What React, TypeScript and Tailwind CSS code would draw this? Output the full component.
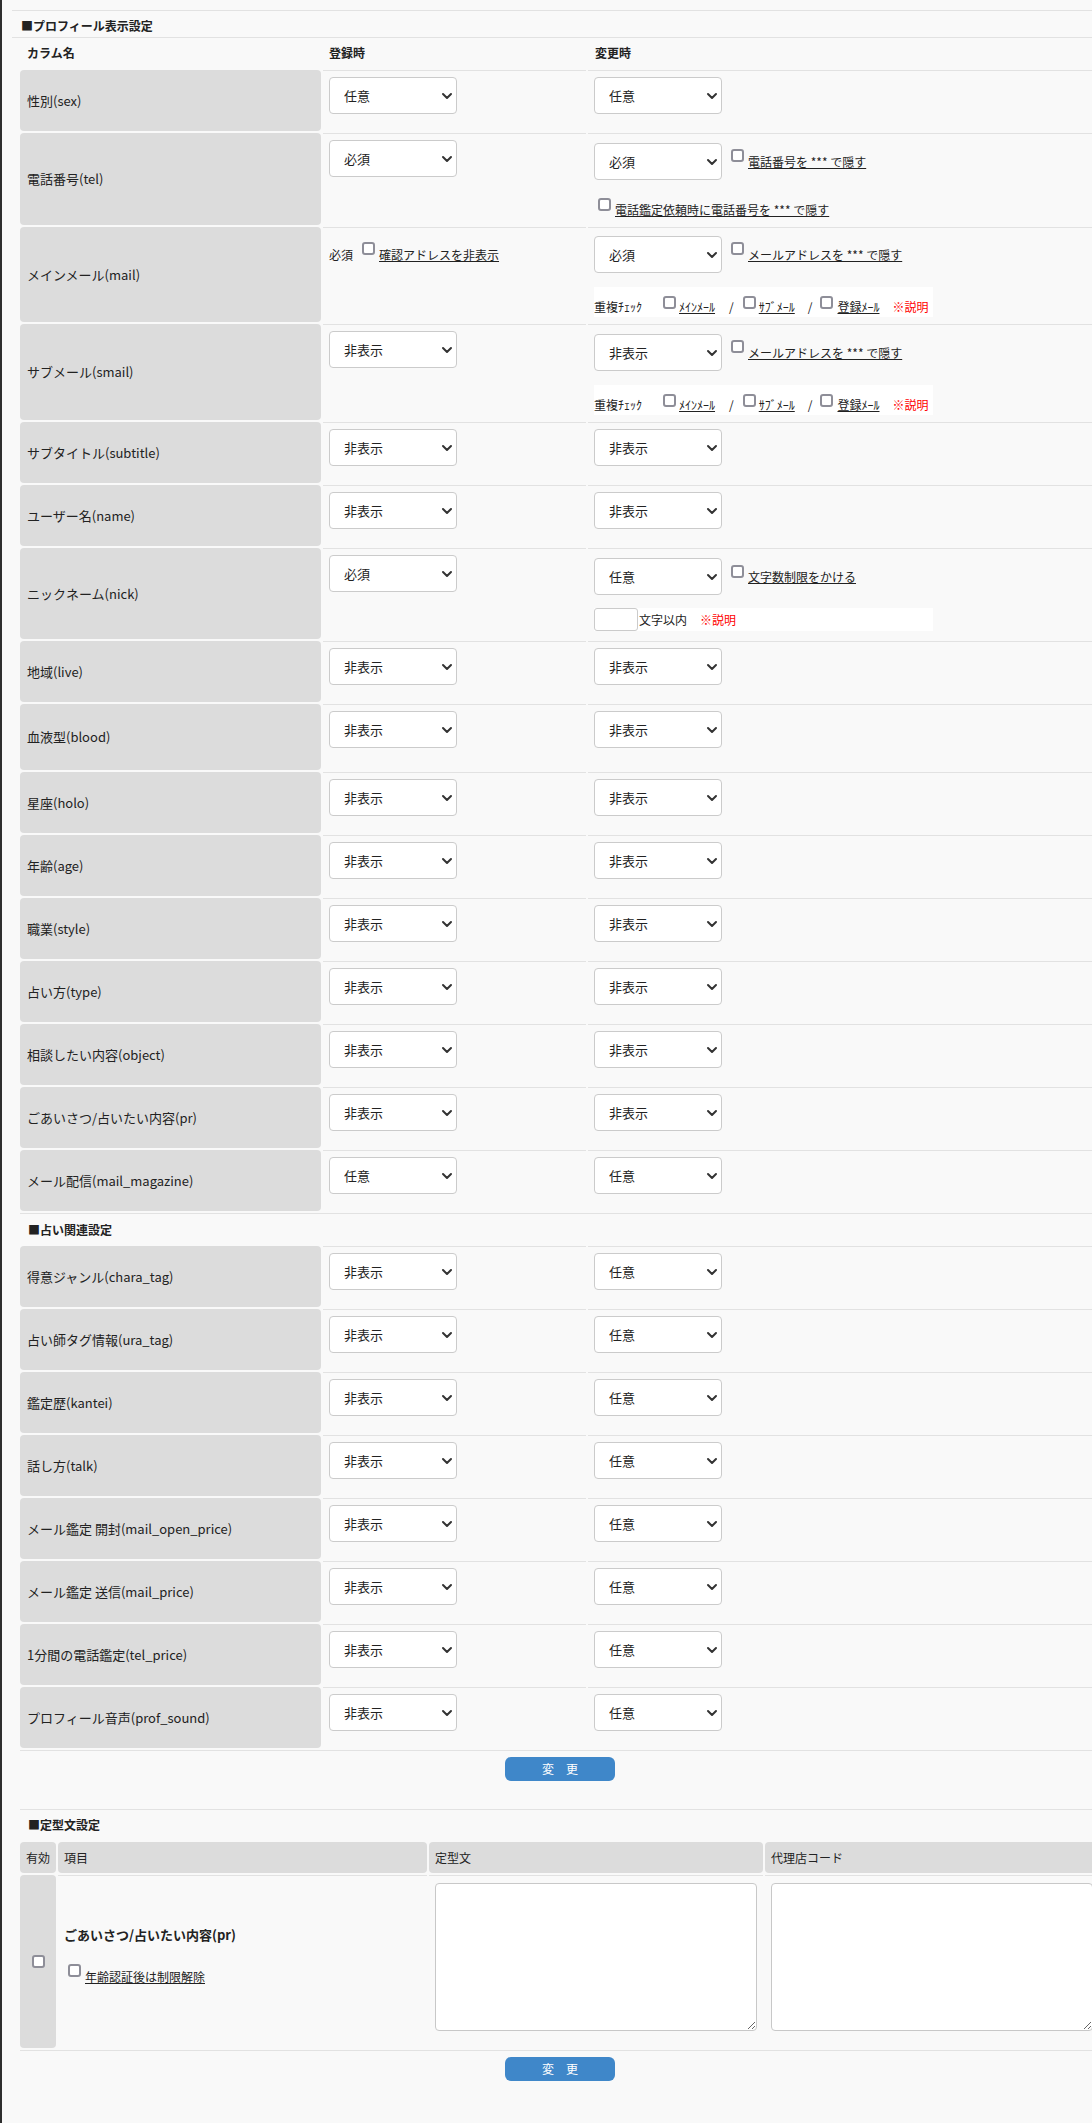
import type { ReactNode } from "react";
import { ChevronDown } from "lucide-react";

const OPTIONS = ["非表示", "任意", "必須"];

const Sel = ({ value }: { value: string }) => (
  <div className="relative h-[37px] w-[128px] shrink-0">
    <select
      defaultValue={value}
      className="h-full w-full appearance-none rounded-[4px] border border-[#cbcbcb] bg-white pl-[14px] text-[13px] text-[#222] outline-none"
    >
      {OPTIONS.map((o) => (
        <option key={o}>{o}</option>
      ))}
    </select>
    <ChevronDown
      size={16}
      strokeWidth={3}
      className="pointer-events-none absolute right-[2px] top-1/2 -translate-y-1/2 text-[#333]"
    />
  </div>
);

const Check = ({ className = "" }: { className?: string }) => (
  <input
    type="checkbox"
    className={`h-[13px] w-[13px] shrink-0 appearance-none rounded-[3px] border-2 border-[#8e8e98] bg-white ${className}`}
  />
);

const Link = ({ children, className = "" }: { children: ReactNode; className?: string }) => (
  <span className={`cursor-pointer text-[12px] underline ${className}`}>{children}</span>
);

// label cell + 登録時 + 変更時
const Row = ({
  label,
  reg,
  edit,
  minH = "min-h-[61px]",
}: {
  label: string;
  reg: ReactNode;
  edit: ReactNode;
  minH?: string;
}) => (
  <div className={`flex gap-[2px] ${minH}`}>
    <div className="flex w-[301px] shrink-0 items-center rounded-[4px] bg-[#dcdcdc] pl-[7px] text-[13px]">
      {label}
    </div>
    <div className="w-[263px] shrink-0 border-t border-[#e2e2e2] px-[6px]">{reg}</div>
    <div className="flex-1 border-t border-[#e2e2e2] px-[6px]">{edit}</div>
  </div>
);

const SimpleRow = ({
  label,
  reg,
  edit,
  minH,
}: {
  label: string;
  reg: string;
  edit: string;
  minH?: string;
}) => (
  <Row
    label={label}
    minH={minH}
    reg={
      <div className="pt-[6px]">
        <Sel value={reg} />
      </div>
    }
    edit={
      <div className="pt-[6px]">
        <Sel value={edit} />
      </div>
    }
  />
);

// select + "*** で隠す" style line
const SelCheck = ({ value, text }: { value: string; text: string }) => (
  <div className="flex items-center">
    <Sel value={value} />
    <Check className="mb-[12px] ml-[9px]" />
    <Link className="ml-[4px]">{text}</Link>
  </div>
);

const DupCheck = () => (
  <div className="mt-[14px] flex h-[30px] w-[339px] items-center bg-white text-[12px]">
    <span className="mt-[9px]">重複ﾁｪｯｸ</span>
    <Check className="ml-[21px]" />
    <Link className="ml-[3px] mt-[9px]">ﾒｲﾝﾒｰﾙ</Link>
    <span className="ml-[14px] mt-[9px]">/</span>
    <Check className="ml-[9px]" />
    <Link className="ml-[3px] mt-[9px]">ｻﾌﾞﾒｰﾙ</Link>
    <span className="ml-[13px] mt-[9px]">/</span>
    <Check className="ml-[8px]" />
    <Link className="ml-[4px] mt-[9px]">登録ﾒｰﾙ</Link>
    <span className="ml-[13px] mt-[9px] text-[#ff0000]">※説明</span>
  </div>
);

const profileRest: [string, string, string][] = [
  ["星座(holo)", "非表示", "非表示"],
  ["年齢(age)", "非表示", "非表示"],
  ["職業(style)", "非表示", "非表示"],
  ["占い方(type)", "非表示", "非表示"],
  ["相談したい内容(object)", "非表示", "非表示"],
  ["ごあいさつ/占いたい内容(pr)", "非表示", "非表示"],
  ["メール配信(mail_magazine)", "任意", "任意"],
];

const uranaiRows: [string, string, string][] = [
  ["得意ジャンル(chara_tag)", "非表示", "任意"],
  ["占い師タグ情報(ura_tag)", "非表示", "任意"],
  ["鑑定歴(kantei)", "非表示", "任意"],
  ["話し方(talk)", "非表示", "任意"],
  ["メール鑑定 開封(mail_open_price)", "非表示", "任意"],
  ["メール鑑定 送信(mail_price)", "非表示", "任意"],
  ["1分間の電話鑑定(tel_price)", "非表示", "任意"],
  ["プロフィール音声(prof_sound)", "非表示", "任意"],
];

const SubmitButton = () => (
  <button
    type="button"
    className="h-[24px] w-[110px] rounded-[6px] bg-[#3f87c9] text-[12px] text-white"
  >
    変　更
  </button>
);

export default function App() {
  return (
    <div className="min-h-[2123px] w-full overflow-hidden border-l-2 border-[#2e2e2e] bg-[#f9f9f9] font-['Noto_Sans_CJK_JP','Noto_Sans',sans-serif] text-[#222]">
      <div className="w-[1098px] pl-[10px] pt-[10px]">
        {/* プロフィール表示設定 */}
        <div className="flex h-[28px] items-center border-y border-[#e2e2e2] pl-[9px] pt-[3px] text-[12px] font-bold">
          ■プロフィール表示設定
        </div>
        <div className="ml-[8px] w-[1080px]">
          <div className="flex h-[30px] items-center gap-[2px] text-[12px] font-bold">
            <div className="w-[301px] shrink-0 pl-[7px]">カラム名</div>
            <div className="w-[263px] shrink-0 pl-[6px]">登録時</div>
            <div className="flex-1 pl-[7px]">変更時</div>
          </div>

          <div className="mt-[2px] flex flex-col gap-[2px]">
            <SimpleRow label="性別(sex)" reg="任意" edit="任意" />
            <Row
              label="電話番号(tel)"
              reg={
                <div className="pt-[6px]">
                  <Sel value="必須" />
                </div>
              }
              edit={
                <div className="pb-[5px] pt-[9px]">
                  <SelCheck value="必須" text="電話番号を *** で隠す" />
                  <div className="mt-[20px] flex h-[20px] items-center">
                    <Check className="mb-[11px] ml-[4px]" />
                    <Link className="ml-[4px]">電話鑑定依頼時に電話番号を *** で隠す</Link>
                  </div>
                </div>
              }
            />
            <Row
              label="メインメール(mail)"
              reg={
                <div className="mt-[8px] flex h-[37px] items-center text-[12px]">
                  <span>必須</span>
                  <Check className="mb-[12px] ml-[9px]" />
                  <Link className="ml-[4px]">確認アドレスを非表示</Link>
                </div>
              }
              edit={
                <div className="pb-[5px] pt-[8px]">
                  <SelCheck value="必須" text="メールアドレスを *** で隠す" />
                  <DupCheck />
                </div>
              }
            />
            <Row
              label="サブメール(smail)"
              reg={
                <div className="pt-[6px]">
                  <Sel value="非表示" />
                </div>
              }
              edit={
                <div className="pb-[5px] pt-[9px]">
                  <SelCheck value="非表示" text="メールアドレスを *** で隠す" />
                  <DupCheck />
                </div>
              }
            />
            <SimpleRow label="サブタイトル(subtitle)" reg="非表示" edit="非表示" />
            <SimpleRow label="ユーザー名(name)" reg="非表示" edit="非表示" />
            <Row
              label="ニックネーム(nick)"
              reg={
                <div className="pt-[6px]">
                  <Sel value="必須" />
                </div>
              }
              edit={
                <div className="pb-[8px] pt-[9px]">
                  <div className="flex items-center">
                    <Sel value="任意" />
                    <Check className="mb-[11px] ml-[9px]" />
                    <Link className="ml-[4px]">文字数制限をかける</Link>
                  </div>
                  <div className="mt-[13px] flex h-[23px] w-[339px] items-center bg-white text-[12px]">
                    <input
                      type="text"
                      className="h-[23px] w-[44px] rounded-[3px] border border-[#cbcbcb] bg-white px-[4px] outline-none"
                    />
                    <span className="ml-[1px]">文字以内</span>
                    <span className="ml-[13px] text-[#ff0000]">※説明</span>
                  </div>
                </div>
              }
            />
            <SimpleRow label="地域(live)" reg="非表示" edit="非表示" />
            <SimpleRow label="血液型(blood)" reg="非表示" edit="非表示" minH="min-h-[66px]" />
            {profileRest.map(([label, reg, edit]) => (
              <SimpleRow key={label} label={label} reg={reg} edit={edit} />
            ))}
          </div>

          {/* 占い関連設定 */}
          <div className="mt-[2px] flex h-[33px] items-center border-t border-[#e2e2e2] pl-[8px] text-[12px] font-bold">
            ■占い関連設定
          </div>
          <div className="flex flex-col gap-[2px]">
            {uranaiRows.map(([label, reg, edit]) => (
              <SimpleRow key={label} label={label} reg={reg} edit={edit} />
            ))}
          </div>

          <div className="mt-[2px] flex h-[59px] justify-center border-t border-[#e2e2e2] pt-[6px]">
            <SubmitButton />
          </div>

          {/* 定型文設定 */}
          <div className="flex h-[31px] items-center border-t border-[#e2e2e2] pl-[8px] text-[12px] font-bold">
            ■定型文設定
          </div>
          <div className="mt-[2px] flex h-[31px] gap-[2px] text-[12px]">
            <div className="flex w-[36px] shrink-0 items-center rounded-[4px] bg-[#dcdcdc] pl-[6px]">有効</div>
            <div className="flex w-[369px] shrink-0 items-center rounded-[4px] bg-[#dcdcdc] pl-[6px]">項目</div>
            <div className="flex w-[334px] shrink-0 items-center rounded-[4px] bg-[#dcdcdc] pl-[6px]">定型文</div>
            <div className="flex flex-1 items-center rounded-[4px] bg-[#dcdcdc] pl-[6px]">代理店コード</div>
          </div>
          <div className="mt-[2px] flex h-[173px] gap-[2px]">
            <div className="flex w-[36px] shrink-0 items-center justify-center rounded-[4px] bg-[#dcdcdc]">
              <Check />
            </div>
            <div className="flex w-[369px] shrink-0 flex-col justify-center border-t border-[#e2e2e2] pb-[12px] pl-[6px]">
              <div className="text-[13px] font-bold leading-[20px]">ごあいさつ/占いたい内容(pr)</div>
              <div className="mt-[22px] flex h-[20px] items-center">
                <Check className="mb-[13px] ml-[4px]" />
                <Link className="ml-[4px]">年齢認証後は制限解除</Link>
              </div>
            </div>
            <div className="w-[334px] shrink-0 border-t border-[#e2e2e2] px-[6px] pt-[7px]">
              <textarea className="block h-[148px] w-[322px] rounded-[4px] border border-[#c8c8c8] bg-white outline-none" />
            </div>
            <div className="flex-1 border-t border-[#e2e2e2] px-[6px] pt-[7px]">
              <textarea className="block h-[148px] w-[322px] rounded-[4px] border border-[#c8c8c8] bg-white outline-none" />
            </div>
          </div>
          <div className="mt-[2px] flex h-[60px] justify-center border-t border-[#e2e2e2] pt-[6px]">
            <SubmitButton />
          </div>
        </div>
      </div>
    </div>
  );
}
